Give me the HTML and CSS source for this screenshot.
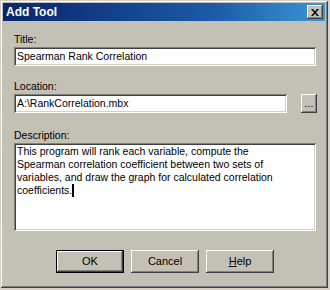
FILE: index.html
```html
<!DOCTYPE html>
<html lang="en">
<head>
    <meta charset="UTF-8">
    <title>Add Tool</title>
    <link rel="stylesheet" href="styles.css">
</head>
<body>
    <div class="window">
        <div class="titlebar">
            <span class="caption">Add Tool</span>
            <span class="close-btn">
                <svg width="8" height="7" viewBox="0 0 8 7">
                    <path d="M0 0h2l2 2.5L6 0h2L5 3.5 8 7H6L4 4.5 2 7H0l3-3.5z" fill="#000"/>
                </svg>
            </span>
        </div>
        <div class="form">
            <div class="field field-title">
                <div class="label">Title:</div>
                <div class="input">Spearman Rank Correlation</div>
            </div>
            <div class="field field-location">
                <div class="label">Location:</div>
                <div class="row">
                    <div class="input grow">A:\RankCorrelation.mbx</div>
                    <span class="browse-btn">...</span>
                </div>
            </div>
            <div class="field field-desc">
                <div class="label">Description:</div>
                <div class="input textarea">This program will rank each variable, compute the Spearman correlation coefficient between two sets of variables, and draw the graph for calculated correlation coefficients.<span class="caret"></span></div>
            </div>
            <div class="buttons">
                <span class="btn default">OK</span>
                <span class="btn">Cancel</span>
                <span class="btn"><u>H</u>elp</span>
            </div>
        </div>
    </div>
</body>
</html>
```

FILE: styles.css
```css
body {
    margin: 0;
    background-color: #d4d0c8;
    font-family: "Liberation Sans", Arial, sans-serif;
    font-size: 10.5px;
    color: #000;
}

.window {
    width: 328px;
    height: 288px;
    box-sizing: border-box;
    padding: 3px;
    background-color: #c3c1b5;
    box-shadow: inset 1px 1px #d4d0c8, inset -1px -1px #404040,
                inset 2px 2px #fff, inset -2px -2px #808080;
}

.titlebar {
    height: 18px;
    display: flex;
    align-items: center;
    justify-content: space-between;
    background: linear-gradient(to right, #0a246a, #1b5aa8 65%, #3a96d4);
    padding: 0 2px 0 3px;
}

.caption {
    color: #fff;
    font-weight: bold;
    font-size: 12px;
}

.close-btn {
    width: 16px;
    height: 14px;
    box-sizing: border-box;
    display: flex;
    align-items: center;
    justify-content: center;
    background-color: #c3c1b5;
    box-shadow: inset -1px -1px #404040, inset 1px 1px #fff,
                inset -2px -2px #808080;
}

.form {
    padding: 0 9px 0 11px;
}

.label {
    line-height: 13px;
    margin-bottom: 1px;
}

.field-title {
    margin-top: 12px;
}

.field-location {
    margin-top: 14px;
}

.field-desc {
    margin-top: 16px;
}

.input {
    height: 19px;
    box-sizing: border-box;
    padding: 2px 3px 0 3px;
    line-height: 15px;
    background-color: #fff;
    box-shadow: inset 1px 1px #808080, inset -1px -1px #fff,
                inset 2px 2px #404040, inset -2px -2px #d4d0c8;
    white-space: nowrap;
}

.row {
    display: flex;
    align-items: flex-start;
    margin-right: -1px;
}

.grow {
    flex: 1;
    margin-right: 14px;
}

.browse-btn {
    width: 16px;
    height: 19px;
    box-sizing: border-box;
    text-align: center;
    line-height: 19px;
    box-shadow: inset -1px -1px #404040, inset 1px 1px #fff,
                inset -2px -2px #808080;
}

.textarea {
    height: 88px;
    white-space: normal;
    padding: 2px 26px 0 3px;
    line-height: 13px;
}

.caret {
    display: inline-block;
    width: 2px;
    height: 13px;
    background-color: #000;
    vertical-align: top;
}

.buttons {
    margin-top: 19px;
    display: flex;
    justify-content: center;
    gap: 7px;
}

.btn {
    width: 68px;
    height: 23px;
    box-sizing: border-box;
    text-align: center;
    line-height: 23px;
    font-size: 11px;
    box-shadow: inset -1px -1px #404040, inset 1px 1px #fff,
                inset -2px -2px #808080;
}

.btn.default {
    border: 1px solid #000;
    line-height: 21px;
}
```
